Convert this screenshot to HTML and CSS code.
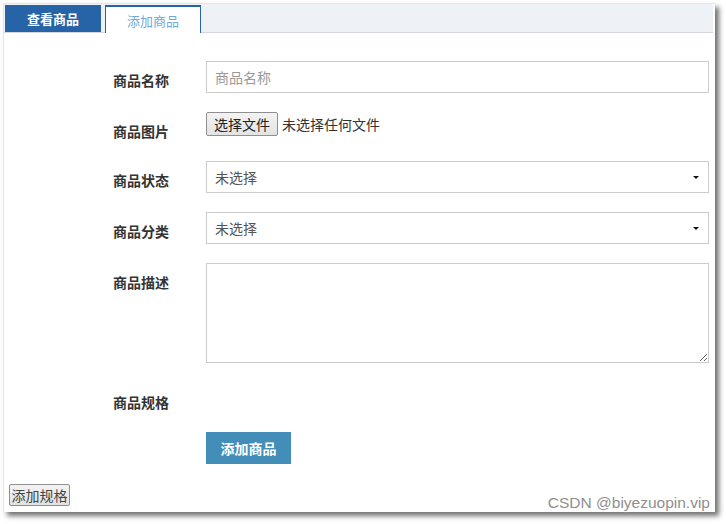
FILE: index.html
```html
<!DOCTYPE html>
<html lang="zh">
<head>
<meta charset="utf-8">
<title>添加商品</title>
<link rel="stylesheet" href="styles.css">
</head>
<body>
<div class="frame">
  <div class="tabbar">
    <div class="tab tab-dark">查看商品</div>
    <div class="tab tab-light">添加商品</div>
  </div>
  <form class="form">
    <div class="row">
      <label class="label">商品名称</label>
      <div class="field"><input class="input" type="text" placeholder="商品名称"></div>
    </div>
    <div class="row">
      <label class="label">商品图片</label>
      <div class="field file-field">
        <span class="file-btn">选择文件</span>
        <span class="file-text">未选择任何文件</span>
      </div>
    </div>
    <div class="row">
      <label class="label">商品状态</label>
      <div class="field select-wrap">
        <select class="select"><option>未选择</option></select>
      </div>
    </div>
    <div class="row">
      <label class="label">商品分类</label>
      <div class="field select-wrap">
        <select class="select"><option>未选择</option></select>
      </div>
    </div>
    <div class="row row-textarea">
      <label class="label">商品描述</label>
      <div class="field"><textarea class="textarea"></textarea></div>
    </div>
    <div class="row">
      <label class="label">商品规格</label>
      <div class="field"></div>
    </div>
    <div class="row row-submit">
      <div class="label-space"></div>
      <div class="field"><button type="button" class="submit">添加商品</button></div>
    </div>
  </form>
  <button type="button" class="add-spec">添加规格</button>
</div>
<div class="watermark">CSDN @biyezuopin.vip</div>
</body>
</html>
```
FILE: styles.css
```css
* { box-sizing: border-box; }
html, body { margin: 0; padding: 0; background: #ffffff; }
body {
  font-family: "Noto Sans CJK SC", "Liberation Sans", sans-serif;
  font-size: 14px;
  color: #333;
  width: 726px;
  height: 524px;
  overflow: hidden;
  position: relative;
}
.frame {
  margin: 3px 0 0 3px;
  width: 712px;
  border-top: 1px solid #e6e6e6;
  border-left: 1px solid #e6e6e6;
  background: #fff;
  box-shadow: 4px 4px 5px rgba(0, 0, 0, 0.55);
  padding-bottom: 6px;
}
.tabbar {
  display: flex;
  height: 29px;
  padding-top: 1px;
  padding-left: 1px;
  background: #eef1f6;
  border-bottom: 1px solid #d3d7dd;
  margin-right: 2px;
}
.tab {
  width: 96px;
  height: 27px;
  display: flex;
  align-items: center;
  justify-content: center;
  font-size: 13px;
}
.tab-dark {
  background: #2764a7;
  color: #fff;
  font-weight: bold;
}
.tab-light {
  margin-left: 4px;
  background: #fff;
  color: #6fa9db;
  border-top: 2px solid #2764a7;
  border-left: 1px solid #2764a7;
  border-right: 1px solid #2764a7;
  height: 28px;
  padding-top: 1px;
}
.form {
  padding: 28px 6px 0 109px;
  margin: 0;
}
.row {
  display: flex;
  margin-bottom: 19px;
}
.row-textarea { margin-bottom: 20px; }
.row-submit { margin-bottom: 20px; }
.label {
  width: 93px;
  padding-top: 9px;
  height: 30px;
  line-height: 20px;
  font-size: 14px;
  font-weight: bold;
  color: #333;
}
.label-space { width: 93px; }
.field { width: 503px; }
.input {
  display: block;
  width: 100%;
  height: 32px;
  border: 1px solid #ccc;
  padding: 0 8px;
  font-family: inherit;
  font-size: 14px;
  color: #555;
  outline: none;
}
.input::placeholder { color: #999; }
.file-field {
  display: flex;
  align-items: flex-start;
  height: 30px;
}
.file-btn {
  display: inline-flex;
  align-items: center;
  justify-content: center;
  width: 72px;
  height: 24px;
  border: 1px solid #8f8f8f;
  border-radius: 2px;
  background: linear-gradient(#f3f3f3, #e3e3e3);
  color: #222;
  font-size: 14px;
}
.file-text {
  margin-left: 4px;
  line-height: 24px;
  color: #333;
  font-size: 14px;
}
.select-wrap { position: relative; }
.select {
  display: block;
  width: 100%;
  height: 32px;
  border: 1px solid #ccc;
  border-radius: 0;
  padding: 0 8px;
  appearance: none;
  -webkit-appearance: none;
  background: #fff;
  font-family: inherit;
  font-size: 14px;
  color: #555;
  outline: none;
}
.select-wrap::after {
  content: "";
  position: absolute;
  right: 10px;
  top: 15px;
  border-left: 3px solid transparent;
  border-right: 3px solid transparent;
  border-top: 3px solid #111;
}
.textarea {
  display: block;
  width: 100%;
  height: 100px;
  border: 1px solid #ccc;
  border-radius: 0;
  font-family: inherit;
  font-size: 14px;
  outline: none;
}
.submit {
  display: block;
  width: 85px;
  height: 32px;
  border: 0;
  background: #438eb9;
  color: #fff;
  font-family: inherit;
  font-size: 14px;
  font-weight: bold;
  padding: 0;
}
.add-spec {
  display: block;
  margin-left: 5px;
  width: 61px;
  height: 22px;
  padding: 0;
  border: 1px solid #8f8f8f;
  border-radius: 2px;
  background: linear-gradient(#f3f3f3, #e1e1e1);
  color: #444;
  font-family: inherit;
  font-size: 14px;
  line-height: 20px;
}
.watermark {
  position: absolute;
  right: 16px;
  top: 494px;
  font-family: "Liberation Sans", sans-serif;
  font-size: 15.5px;
  color: #8f8f8f;
  text-shadow: 0 0 2px #fff, 0 0 2px #fff;
}
```
